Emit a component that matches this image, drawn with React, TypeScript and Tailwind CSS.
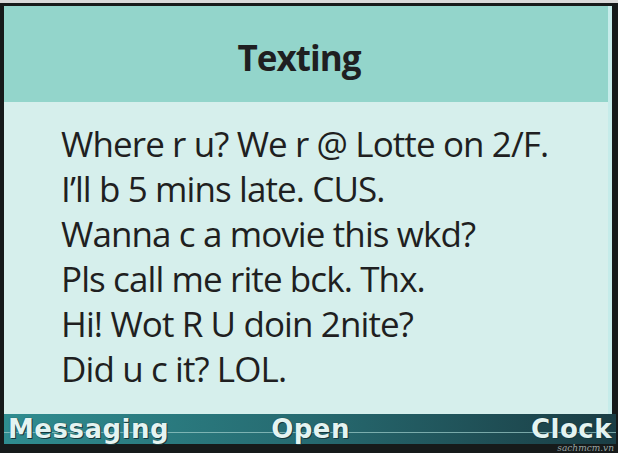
import React from "react";

const lines = [
  "Where r u? We r @ Lotte on 2/F.",
  "I\u2019ll b 5 mins late. CUS.",
  "Wanna c a movie this wkd?",
  "Pls call me rite bck. Thx.",
  "Hi! Wot R U doin 2nite?",
  "Did u c it? LOL.",
];

const softKey =
  "relative z-10 text-[26px] font-bold leading-[24px] tracking-[0.5px] text-[#e4f4f1] [font-family:'DejaVu_Sans',sans-serif] [text-shadow:0_0_1px_#0d2c30,1px_1px_0_#173a3e]";

const App: React.FC = () => {
  return (
    <div className="w-[618px] h-[453px] bg-[#d9d9d9] pt-[3px] flex flex-col">
      <div className="flex flex-1 flex-col bg-[#161a1a] pl-[4px] pr-[6px] pt-[3px] pb-[9px]">
        <div className="flex flex-1 flex-col border-r-[4px] border-[#c6ecea]">
          <div className="h-[96px] bg-[#93d5cb] flex justify-center items-start pt-[34px] pr-[14px]">
            <span className="text-[35px] font-bold leading-none text-[#1f1f21] [font-family:'Open_Sans',sans-serif] tracking-[-1px]">
              Texting
            </span>
          </div>
          <div className="flex-1 bg-[#d6efec] pl-[57px] pt-[19px]">
            {lines.map((l) => (
              <div
                key={l}
                className="text-[35px] leading-[45px] text-[#1f1f21] [font-family:'Open_Sans',sans-serif] tracking-[-0.9px] whitespace-nowrap"
              >
                {l}
              </div>
            ))}
          </div>
        </div>
        <div className="relative h-[30px] -mr-[4px] flex items-center pl-[4px] pr-[4px] bg-gradient-to-r from-[#2f8d90] via-[#266a70] to-[#1a3d44]">
          <div className="absolute left-0 right-0 top-[18px] h-px bg-[#9fcfcc]/70" />
          <span className={softKey}>Messaging</span>
          <span className={softKey + " ml-[102px]"}>Open</span>
          <span className={softKey + " ml-auto"}>Clock</span>
          <span className="absolute right-[2px] -bottom-[9px] text-[9px] italic leading-[9px] text-[#9aa6a6] [font-family:'DejaVu_Serif',serif]">
            sachmcm.vn
          </span>
        </div>
      </div>
    </div>
  );
};

export default App;
